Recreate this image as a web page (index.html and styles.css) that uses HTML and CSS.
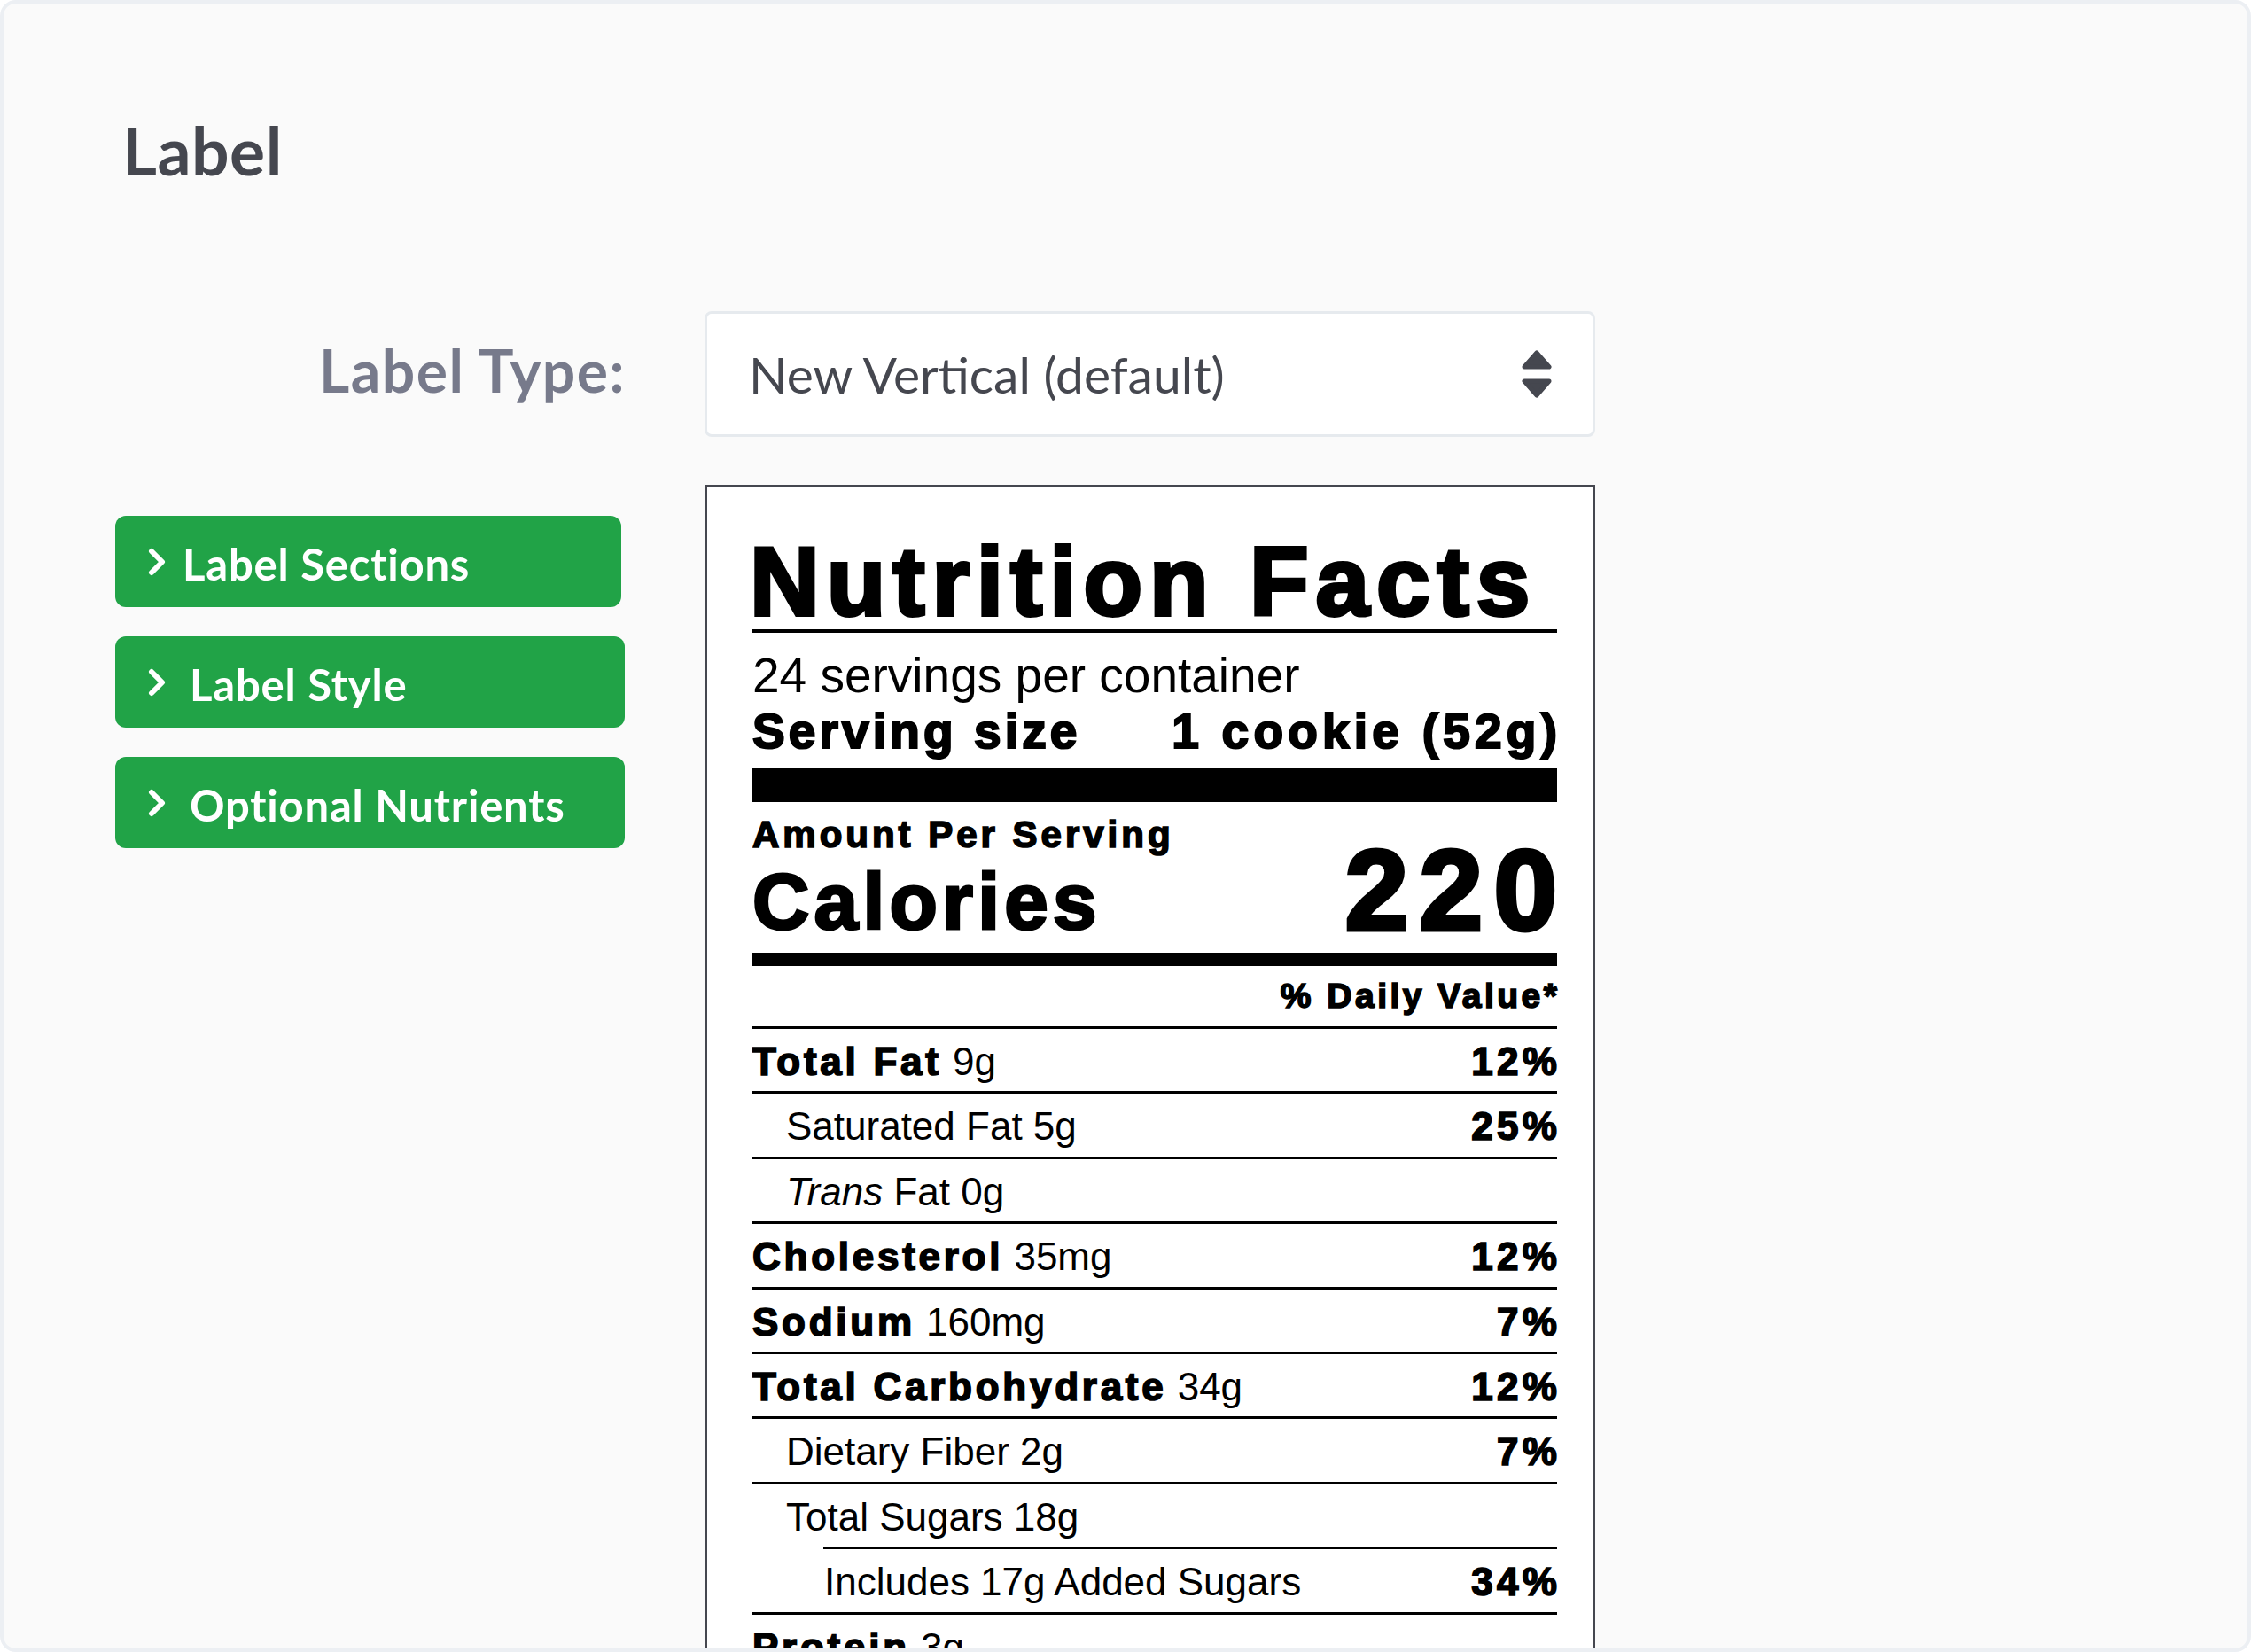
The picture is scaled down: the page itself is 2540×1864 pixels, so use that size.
FILE: index.html
```html
<!DOCTYPE html>
<html lang="en">
<head>
<meta charset="utf-8">
<title>Label</title>
<link rel="stylesheet" href="styles.css">
</head>
<body>
<div class="card">
  <h1 class="page-title">Label</h1>

  <div class="form-row form-row--type">
    <div class="side">
      <label class="field-label">Label Type:</label>
    </div>
    <div class="main">
      <div class="select">
        <span class="select-value">New Vertical (default)</span>
        <svg class="select-arrows" width="34" height="54" viewBox="0 0 34 54" aria-hidden="true">
          <path d="M17 3 L31 19 L3 19 Z" fill="#45474f" stroke="#45474f" stroke-width="5" stroke-linejoin="round"/>
          <path d="M3 35 L31 35 L17 51 Z" fill="#45474f" stroke="#45474f" stroke-width="5" stroke-linejoin="round"/>
        </svg>
      </div>
    </div>
  </div>

  <div class="form-row form-row--content">
    <div class="side side--buttons">
      <button class="btn btn--tight">
        <svg class="chev" width="20" height="32" viewBox="0 0 20 32" aria-hidden="true"><polyline points="4,4 16,16 4,28" fill="none" stroke="#fff" stroke-width="6" stroke-linecap="round" stroke-linejoin="round"/></svg>
        <span>Label Sections</span>
      </button>
      <button class="btn">
        <svg class="chev" width="20" height="32" viewBox="0 0 20 32" aria-hidden="true"><polyline points="4,4 16,16 4,28" fill="none" stroke="#fff" stroke-width="6" stroke-linecap="round" stroke-linejoin="round"/></svg>
        <span>Label Style</span>
      </button>
      <button class="btn">
        <svg class="chev" width="20" height="32" viewBox="0 0 20 32" aria-hidden="true"><polyline points="4,4 16,16 4,28" fill="none" stroke="#fff" stroke-width="6" stroke-linecap="round" stroke-linejoin="round"/></svg>
        <span>Optional Nutrients</span>
      </button>
    </div>

    <div class="main">
      <div class="nf-box">
        <div class="nf">
          <div class="nf-title heavy">Nutrition Facts</div>
          <div class="nf-servings">24 servings per container</div>
          <div class="nf-size"><b>Serving size</b><b class="end">1 cookie (52g)</b></div>
          <div class="nf-cal">
            <div class="nf-cal-left">
              <div class="nf-amount heavy">Amount Per Serving</div>
              <div class="nf-cal-label heavy">Calories</div>
            </div>
            <div class="nf-cal-value heavy">220</div>
          </div>
          <div class="nf-dv-head"><b class="end">% Daily Value*</b></div>

          <div class="nf-row"><span><b>Total Fat</b> 9g</span><b class="end">12%</b></div>
          <div class="nf-row nf-row--sub"><span>Saturated Fat 5g</span><b class="end">25%</b></div>
          <div class="nf-row nf-row--sub"><span><i>Trans</i> Fat 0g</span></div>
          <div class="nf-row"><span><b>Cholesterol</b> 35mg</span><b class="end">12%</b></div>
          <div class="nf-row"><span><b>Sodium</b> 160mg</span><b class="end">7%</b></div>
          <div class="nf-row"><span><b>Total Carbohydrate</b> 34g</span><b class="end">12%</b></div>
          <div class="nf-row nf-row--sub"><span>Dietary Fiber 2g</span><b class="end">7%</b></div>
          <div class="nf-row nf-row--sub"><span>Total Sugars 18g</span></div>
          <div class="nf-row nf-row--added"><span>Includes 17g Added Sugars</span><b class="end">34%</b></div>
          <div class="nf-row"><span><b>Protein</b> 3g</span></div>
        </div>
      </div>
    </div>
  </div>
</div>
</body>
</html>
```

FILE: styles.css
```css
* { box-sizing: border-box; }

html, body {
  margin: 0;
  padding: 0;
  background: #ffffff;
}

.card {
  width: 2540px;
  height: 1864px;
  border: 4px solid #eceff3;
  border-radius: 18px;
  background: #fafafa;
  overflow: hidden;
  padding: 120px 0 0 126px;
  font-family: Lato, "Noto Sans", sans-serif;
}

.page-title {
  margin: 0 0 0 8px;
  font-size: 75px;
  line-height: 90px;
  font-weight: 700;
  color: #45474f;
  letter-spacing: 0.5px;
}

.form-row {
  display: flex;
  gap: 90px;
}

.form-row--type {
  margin-top: 137px;
  align-items: center;
}

.form-row--content {
  margin-top: 54px;
  align-items: flex-start;
}

.side {
  width: 575px;
  flex: none;
}

.main {
  width: 1005px;
  flex: none;
}

.field-label {
  display: block;
  text-align: right;
  font-size: 66px;
  line-height: 79px;
  font-weight: 700;
  color: #777a8b;
  letter-spacing: 1.5px;
  margin-right: -1px;
  margin-bottom: 10px;
}

.select {
  height: 142px;
  border: 3px solid #e6eaee;
  border-radius: 8px;
  background: #ffffff;
  display: flex;
  align-items: center;
  justify-content: space-between;
  padding: 0 46px 0 47px;
  font-size: 57px;
  color: #45474f;
}

.select-arrows {
  display: block;
  flex: none;
}

.side--buttons {
  padding-top: 35px;
  display: flex;
  flex-direction: column;
  gap: 33px;
}

.btn {
  display: flex;
  align-items: center;
  gap: 27px;
  width: 100%;
  height: 103px;
  padding: 5px 0 0 37px;
  border: none;
  border-radius: 12px;
  background: #21a347;
  color: #ffffff;
  font-family: Lato, "Noto Sans", sans-serif;
  font-size: 49px;
  font-weight: 700;
  letter-spacing: 0.8px;
  text-align: left;
  cursor: pointer;
}

.btn--tight {
  gap: 19px;
  width: 571px;
}

.chev {
  display: block;
  flex: none;
  margin-top: -5px;
}

/* Nutrition facts panel */
.nf-box {
  border: 3px solid #45474f;
  background: #ffffff;
  padding: 52px 0 0 51px;
  height: 1400px;
}

.nf {
  width: 908px;
  font-family: "Liberation Sans", Arial, sans-serif;
  color: #000000;
}

.nf b,
.heavy {
  font-weight: 700;
  -webkit-text-stroke: 1.7px #000000;
  letter-spacing: 0.09em;
}

.nf .end {
  margin-right: -0.09em;
}

.nf-title {
  font-size: 109px;
  line-height: 108px;
  -webkit-text-stroke: 4px #000000;
  letter-spacing: 0.073em;
  text-indent: -3px;
  border-bottom: 4px solid #000000;
  white-space: nowrap;
}

.nf-servings {
  margin-top: 17px;
  font-size: 55px;
  line-height: 63px;
}

.nf-size {
  display: flex;
  justify-content: space-between;
  font-size: 55px;
  line-height: 63px;
  padding-bottom: 10px;
  border-bottom: 38px solid #000000;
}

.nf-size b {
  -webkit-text-stroke: 2.2px #000000;
  letter-spacing: 0.075em;
}

.nf-size .end {
  letter-spacing: 0.095em;
  margin-right: -0.095em;
}

.nf-cal {
  display: flex;
  justify-content: space-between;
  align-items: flex-end;
  margin-top: 14px;
  padding-bottom: 6px;
  border-bottom: 15px solid #000000;
}

.nf-amount {
  font-size: 42px;
  line-height: 46px;
  letter-spacing: 0.095em;
}

.nf-cal-label {
  font-size: 89px;
  line-height: 104px;
  -webkit-text-stroke: 3px #000000;
  letter-spacing: 0.06em;
}

.nf-cal-value {
  font-size: 128px;
  line-height: 128px;
  -webkit-text-stroke: 5px #000000;
  letter-spacing: 0.1em;
  margin-right: -0.1em;
}

.nf-dv-head {
  text-align: right;
  font-size: 39px;
  line-height: 48px;
  padding: 10px 0;
}

.nf-dv-head b {
  letter-spacing: 0.09em;
}

.nf-row {
  display: flex;
  justify-content: space-between;
  border-top: 3px solid #000000;
  padding: 8px 0 4.4px;
  font-size: 44px;
  line-height: 58px;
  white-space: nowrap;
}

.nf-row b {
  letter-spacing: 0.085em;
}

.nf-row .end {
  letter-spacing: 0.1em;
  margin-right: -0.1em;
}

.nf-row--sub {
  padding-left: 38px;
}

.nf-row--added {
  margin-left: 80px;
  text-indent: 1px;
}
```
